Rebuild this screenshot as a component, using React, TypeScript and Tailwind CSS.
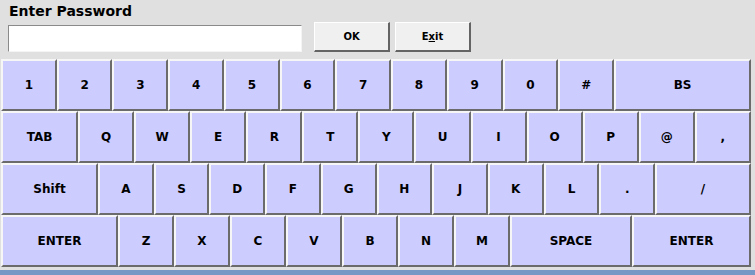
import React from "react";

type KeyDef = { label: string; w?: string };

const rows: KeyDef[][] = [
  [
    ..."1234567890#".split("").map((k) => ({ label: k })),
    { label: "BS", w: "w-[137px]" },
  ],
  [
    { label: "TAB", w: "w-[77px]" },
    ..."QWERTYUIOP@,".split("").map((k) => ({ label: k })),
  ],
  [
    { label: "Shift", w: "w-[97px]" },
    ..."ASDFGHJKL.".split("").map((k) => ({ label: k })),
    { label: "/", w: "w-[96px]" },
  ],
  [
    { label: "ENTER", w: "w-[117px]" },
    ..."ZXCVBNM".split("").map((k) => ({ label: k })),
    { label: "SPACE", w: "w-[122px]" },
    { label: "ENTER", w: "w-[119px]" },
  ],
];

function Key({ label, w }: KeyDef) {
  return (
    <button
      className={`${w ?? "flex-1 min-w-0"} h-full flex items-center justify-center bg-[#ccccff] border-t-2 border-l-2 border-t-[#f6f6f6] border-l-[#f6f6f6] border-r-2 border-b-2 border-r-[#6b6b6b] border-b-[#6b6b6b] text-[12px] font-bold text-black`}
    >
      {label}
    </button>
  );
}

export default function App() {
  return (
    <div className="w-[755px] h-[275px] bg-[#e0e0e0] flex flex-col overflow-hidden font-['DejaVu_Sans',sans-serif] text-black">
      {/* Header */}
      <div className="pl-[9px] pt-[3px] text-[14px] leading-4 font-bold">Enter Password</div>
      <div className="flex items-end mt-[3px] pl-2 h-[30px]">
        <input
          className="w-[294px] h-[27px] bg-white border-t border-l border-t-[#8a8a8a] border-l-[#8a8a8a] border-b border-r border-b-[#f4f4f4] border-r-[#f4f4f4] outline-none"
          type="password"
        />
        <button className="ml-3 w-[76px] h-[30px] bg-[#f0f0f0] border-t border-l border-t-[#ffffff] border-l-[#ffffff] border-r-2 border-b-2 border-r-[#646464] border-b-[#646464] text-[10px] font-bold">
          OK
        </button>
        <button className="ml-[5px] w-[76px] h-[30px] bg-[#f0f0f0] border-t border-l border-t-[#ffffff] border-l-[#ffffff] border-r-2 border-b-2 border-r-[#646464] border-b-[#646464] text-[10px] font-bold">
          E<span className="underline">x</span>it
        </button>
      </div>

      {/* Keyboard */}
      <div className="mt-[7px] ml-[1px] w-[750px] flex flex-col">
        {rows.map((row, i) => (
          <div key={i} className="flex h-[52px]">
            {row.map((k, j) => (
              <Key key={j} {...k} />
            ))}
          </div>
        ))}
      </div>

      <div className="mt-[3px] flex-1 bg-[#7798c5]" />
    </div>
  );
}
